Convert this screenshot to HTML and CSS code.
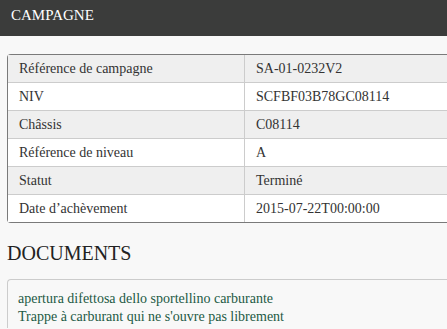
FILE: index.html
```html
<!DOCTYPE html>
<html lang="fr">
<head>
  <meta charset="UTF-8">
  <title>Campagne</title>
  <link rel="stylesheet" href="styles.css">
</head>
<body>
  <div class="topbar">
    <h2>CAMPAGNE</h2>
  </div>
  <div class="content">
    <table class="details">
      <tr><td>Référence de campagne</td><td>SA-01-0232V2</td></tr>
      <tr><td>NIV</td><td>SCFBF03B78GC08114</td></tr>
      <tr><td>Châssis</td><td>C08114</td></tr>
      <tr><td>Référence de niveau</td><td>A</td></tr>
      <tr><td>Statut</td><td>Terminé</td></tr>
      <tr><td>Date d’achèvement</td><td>2015-07-22T00:00:00</td></tr>
    </table>
    <h1>DOCUMENTS</h1>
    <div class="docs">
      <a href="#">apertura difettosa dello sportellino carburante</a>
      <a href="#">Trappe à carburant qui ne s'ouvre pas librement</a>
    </div>
  </div>
</body>
</html>
```

FILE: styles.css
```css
body {
  margin: 0;
  background-color: #f8f8f8;
  font-family: "Liberation Serif", serif;
  color: #333;
  overflow: hidden;
}
.topbar {
  background-color: #3b3c3b;
  height: 36px;
  padding: 0 11px;
}
.topbar h2 {
  margin: 0;
  color: #fff;
  font-size: 15px;
  font-weight: normal;
  line-height: 30px;
}
.content {
  padding: 18px 0 0 7px;
}
.details {
  width: 460px;
  border-collapse: separate;
  border-spacing: 0;
  border: 1px solid #7a7a7a;
  border-right: none;
  border-radius: 4px 0 0 4px;
  font-size: 14px;
}
.details td {
  height: 27px;
  padding: 0 11px;
  border-bottom: 1px solid #cccccc;
}
.details tr:last-child td {
  border-bottom: none;
}
.details td:first-child {
  width: 214px;
  border-right: 1px solid #cccccc;
}
.details tr:nth-child(odd) td {
  background-color: #efefef;
}
.details tr:nth-child(even) td {
  background-color: #fff;
}
h1 {
  margin: 18px 0 0;
  font-size: 20px;
  font-weight: normal;
  color: #222;
  line-height: 24px;
}
.docs {
  margin-top: 14px;
  border: 1px solid #cccccc;
  border-right: none;
  border-bottom: none;
  border-radius: 4px 0 0 0;
  padding: 10px 10px 0;
  height: 38px;
}
.docs a {
  display: block;
  color: #1d5a45;
  text-decoration: none;
  font-size: 14px;
  line-height: 18px;
}
```
